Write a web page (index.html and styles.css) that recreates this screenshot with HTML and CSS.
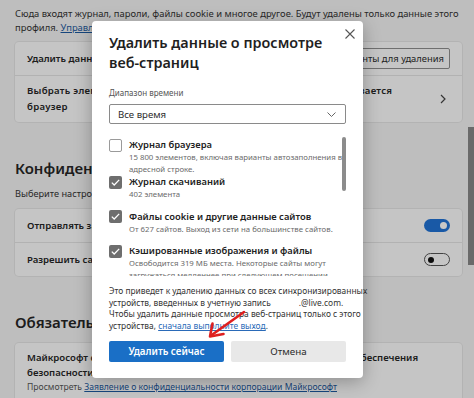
FILE: index.html
```html
<!DOCTYPE html>
<html lang="ru">
<head>
<meta charset="utf-8">
<title>Настройки — Конфиденциальность</title>
<link rel="stylesheet" href="styles.css">
</head>
<body>
<div class="page">
  <p class="desc">Сюда входят журнал, пароли, файлы cookie и многое другое. Будут удалены только данные этого<br>профиля. <a href="#">Управление данными</a></p>
  <div class="card">
    <div class="row row-short">
      <span class="label">Удалить данные о просмотре сейчас</span>
      <span class="outline-btn">Выбрать элементы для удаления</span>
    </div>
    <div class="row row-tall">
      <span class="label wide">Выбрать элементы, которые удаляются каждый раз, когда закрывается<br>браузер</span>
      <svg class="chev" width="6" height="10" viewBox="0 0 6 10"><path d="M1 1l4 4-4 4" fill="none" stroke="#444" stroke-width="1.2"/></svg>
    </div>
  </div>

  <h2 class="section">Конфиденциальность</h2>
  <p class="sub">Выберите настройки конфиденциальности для Microsoft Edge.</p>
  <div class="card">
    <div class="row row-toggle">
      <span class="label">Отправлять запросы «Не отслеживать»</span>
      <span class="toggle on"><span class="knob"></span></span>
    </div>
    <div class="row row-toggle">
      <span class="label">Разрешить сайтам проверять, сохранены ли способы оплаты</span>
      <span class="toggle off"><span class="knob"></span></span>
    </div>
  </div>

  <h2 class="section section-2">Обязательные диагностические данные</h2>
  <div class="card card-diag">
    <p class="diag-text">Майкрософт собирает обязательные диагностические данные для обеспечения<br>безопасности, актуальности и правильной работы Microsoft Edge</p>
    <p class="diag-note">Просмотреть <a href="#">Заявление о конфиденциальности корпорации Майкрософт</a></p>
  </div>
</div>

<div class="overlay"></div>
<div class="page-scroll"></div>

<div class="dialog">
  <svg class="close" width="10" height="10" viewBox="0 0 10 10"><path d="M0.5 0.5l9 9M9.5 0.5l-9 9" stroke="#555" stroke-width="1.1"/></svg>
  <h1 class="title">Удалить данные о просмотре<br>веб-страниц</h1>
  <div class="field-label">Диапазон времени</div>
  <div class="select">
    <span>Все время</span>
    <svg width="9" height="5" viewBox="0 0 9 5"><path d="M0.5 0.5l4 4 4-4" fill="none" stroke="#666" stroke-width="1"/></svg>
  </div>
  <div class="list">
    <div class="thumb"></div>
    <div class="item tight">
      <span class="cb"></span>
      <div class="item-body">
        <div class="item-title">Журнал браузера</div>
        <div class="item-desc">15 800 элементов, включая варианты автозаполнения в<br>адресной строке.</div>
      </div>
    </div>
    <div class="item">
      <span class="cb checked"><svg width="9" height="7" viewBox="0 0 9 7"><path d="M0.8 3.6l2.4 2.4L8.2 0.9" fill="none" stroke="#fff" stroke-width="1.3"/></svg></span>
      <div class="item-body">
        <div class="item-title">Журнал скачиваний</div>
        <div class="item-desc">402 элемента</div>
      </div>
    </div>
    <div class="item">
      <span class="cb checked"><svg width="9" height="7" viewBox="0 0 9 7"><path d="M0.8 3.6l2.4 2.4L8.2 0.9" fill="none" stroke="#fff" stroke-width="1.3"/></svg></span>
      <div class="item-body">
        <div class="item-title">Файлы cookie и другие данные сайтов</div>
        <div class="item-desc">От 627 сайтов. Выход из сети на большинстве сайтов.</div>
      </div>
    </div>
    <div class="item">
      <span class="cb checked"><svg width="9" height="7" viewBox="0 0 9 7"><path d="M0.8 3.6l2.4 2.4L8.2 0.9" fill="none" stroke="#fff" stroke-width="1.3"/></svg></span>
      <div class="item-body">
        <div class="item-title">Кэшированные изображения и файлы</div>
        <div class="item-desc">Освободится 319 МБ места. Некоторые сайты могут<br>загружаться медленнее при следующем посещении.</div>
      </div>
    </div>
  </div>
  <p class="footer-text">Это приведет к удалению данных со всех синхронизированных<br>устройств, введенных в учетную запись<span class="redacted"></span>.@live.com.<br>Чтобы удалить данные просмотра веб-страниц только с этого<br>устройства, <a href="#">сначала выполните выход</a>.</p>
  <div class="buttons">
    <span class="btn primary">Удалить сейчас</span>
    <span class="btn secondary">Отмена</span>
  </div>
</div>

<svg class="arrow" width="60" height="50" viewBox="0 0 60 50"><path d="M44 12L11 35.5" fill="none" stroke="#de1f1f" stroke-width="2.6" stroke-linecap="round"/><path d="M12.5 23.5L10 36.5L23.5 34" fill="none" stroke="#de1f1f" stroke-width="2.6" stroke-linecap="round" stroke-linejoin="round"/></svg>
</body>
</html>
```
FILE: styles.css
```css
html, body {
  margin: 0;
  padding: 0;
}
body {
  width: 474px;
  height: 398px;
  overflow: hidden;
  position: relative;
  background: #f4f4f4;
  font-family: "Noto Sans", "Open Sans", sans-serif;
  color: #2e2e2e;
}
.page {
  padding: 7px 12px 0 15px;
}
.desc {
  margin: 0;
  font-size: 9.4px;
  line-height: 14px;
  color: #333;
  white-space: nowrap;
}
.desc a {
  color: #1d5aa0;
}
.card {
  margin-top: 7px;
  width: 447px;
  background: #fdfdfd;
  border-radius: 4px;
  box-shadow: 0 0 0 1px #e6e6e6;
}
.row {
  display: flex;
  align-items: center;
  justify-content: space-between;
  padding: 0 12px;
  border-top: 1px solid #e4e4e4;
}
.row:first-child {
  border-top: 0;
}
.row-short {
  height: 33px;
}
.row-tall {
  height: 46px;
}
.row-toggle {
  height: 33px;
}
.label {
  font-size: 9.6px;
  font-weight: 600;
  line-height: 16px;
  color: #262626;
  white-space: nowrap;
}
.label.wide {
  letter-spacing: 0.26px;
}
.outline-btn {
  font-size: 9.4px;
  line-height: 19px;
  padding: 0 5px;
  border: 1px solid #8f8f8f;
  border-radius: 2px;
  background: #fdfdfd;
  color: #2b2b2b;
  white-space: nowrap;
}
.chev {
  margin-right: 4px;
}
.section {
  margin: 36px 0 0;
  font-size: 15px;
  line-height: 20px;
  font-weight: 600;
  color: #262626;
  white-space: nowrap;
}
.section-2 {
  margin-top: 36px;
}
.sub {
  margin: 9px 0 0;
  font-size: 9.2px;
  line-height: 14px;
  color: #333;
  white-space: nowrap;
}
.sub + .card {
  margin-top: 8px;
}
.toggle {
  width: 26px;
  height: 13px;
  border-radius: 7px;
  box-sizing: border-box;
  display: flex;
  align-items: center;
}
.toggle.on {
  background: #2173d5;
  justify-content: flex-end;
  padding-right: 3px;
}
.toggle.on .knob {
  width: 7px;
  height: 7px;
  border-radius: 50%;
  background: #fff;
}
.toggle.off {
  border: 1px solid #555;
  background: #fdfdfd;
  padding-left: 3px;
}
.toggle.off .knob {
  width: 6px;
  height: 6px;
  border-radius: 50%;
  background: #111;
}
.section-2 + .card {
  margin-top: 11px;
}
.card-diag {
  padding: 7px 12px 12px;
  box-sizing: border-box;
  height: 70px;
}
.diag-text {
  margin: 0;
  font-size: 9.6px;
  font-weight: 600;
  line-height: 15px;
  color: #262626;
  white-space: nowrap;
}
.diag-note {
  margin: 0;
  font-size: 8.6px;
  line-height: 14px;
  color: #555;
  white-space: nowrap;
}
.diag-note a {
  color: #1d5aa0;
}
.overlay {
  position: absolute;
  inset: 0;
  background: rgba(0, 0, 0, 0.22);
}
.page-scroll {
  position: absolute;
  right: 0;
  top: 127px;
  width: 6px;
  height: 138px;
  background: #6a6a6a;
}
.dialog {
  position: absolute;
  left: 92px;
  top: 21px;
  width: 271px;
  box-sizing: border-box;
  padding: 12px 17px 16px;
  background: #fff;
  border-radius: 4px;
  box-shadow: 0 4px 18px rgba(0, 0, 0, 0.28);
}
.close {
  position: absolute;
  right: 8px;
  top: 8px;
}
.title {
  margin: 0;
  font-size: 14.4px;
  line-height: 20px;
  font-weight: 600;
  color: #1f1f1f;
  white-space: nowrap;
}
.field-label {
  margin-top: 14px;
  font-size: 8px;
  line-height: 12px;
  color: #555;
}
.select {
  margin-top: 5px;
  height: 20px;
  box-sizing: border-box;
  border: 1px solid #8a8a8a;
  border-radius: 2px;
  display: flex;
  align-items: center;
  justify-content: space-between;
  padding: 0 9px 0 8px;
  font-size: 9.6px;
  color: #2b2b2b;
}
.list {
  position: relative;
  margin-top: 8px;
  height: 143.5px;
  overflow: hidden;
  padding-top: 6px;
  box-sizing: border-box;
}
.thumb {
  position: absolute;
  right: 0;
  top: 5px;
  width: 4px;
  height: 54px;
  border-radius: 2px;
  background: #8c8c8c;
}
.item {
  display: flex;
  gap: 7px;
  margin-bottom: 9.5px;
}
.item.tight {
  margin-bottom: 0;
}
.cb {
  flex: none;
  width: 13px;
  height: 13px;
  box-sizing: border-box;
  margin-top: 0.5px;
  border-radius: 2px;
  border: 1px solid #9a9a9a;
  background: #fff;
  display: flex;
  align-items: center;
  justify-content: center;
}
.cb.checked {
  border: 0;
  background: #6e6e6e;
}
.item-title {
  font-size: 9.4px;
  font-weight: 600;
  line-height: 13px;
  color: #222;
  white-space: nowrap;
}
.item-desc {
  font-size: 7.8px;
  line-height: 12px;
  color: #6a6a6a;
  white-space: nowrap;
}
.footer-text {
  margin: 9.5px 0 0;
  font-size: 8.4px;
  line-height: 11.7px;
  color: #333;
  white-space: nowrap;
}
.footer-text a {
  color: #2a6ab8;
}
.redacted {
  display: inline-block;
  width: 28px;
}
.buttons {
  margin-top: 9px;
  display: grid;
  grid-template-columns: 1fr 1fr;
  gap: 7px;
}
.btn {
  height: 21px;
  display: flex;
  align-items: center;
  justify-content: center;
  font-size: 9.8px;
  font-weight: 600;
  border-radius: 2px;
}
.btn.primary {
  background: #1a6fc6;
  color: #fff;
}
.btn.secondary {
  background: #e8e8e8;
  color: #2b2b2b;
  font-weight: 400;
}
.arrow {
  position: absolute;
  left: 200px;
  top: 300px;
}
```
